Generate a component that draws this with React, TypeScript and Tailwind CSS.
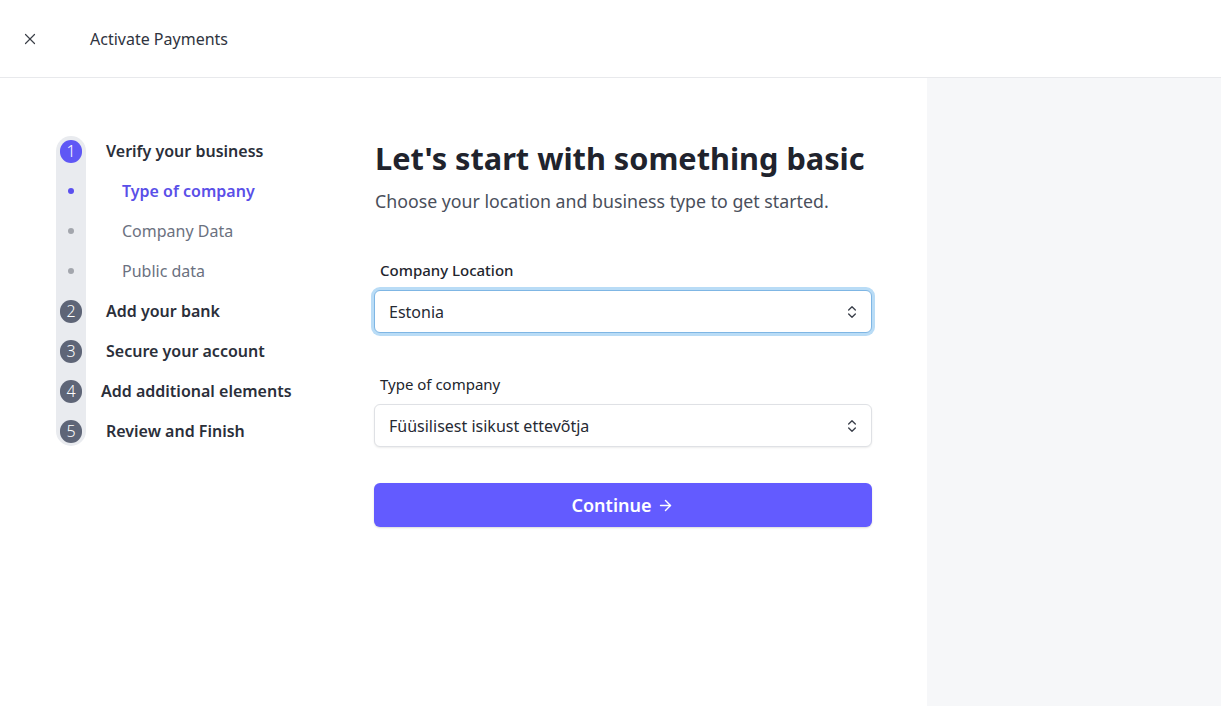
import React from 'react';
import { X, ChevronsUpDown, ArrowRight } from 'lucide-react';

type Row =
  | { kind: 'step'; n: number; label: string; active?: boolean; shift?: boolean }
  | { kind: 'sub'; label: string; active?: boolean };

const rows: Row[] = [
  { kind: 'step', n: 1, label: 'Verify your business', active: true },
  { kind: 'sub', label: 'Type of company', active: true },
  { kind: 'sub', label: 'Company Data' },
  { kind: 'sub', label: 'Public data' },
  { kind: 'step', n: 2, label: 'Add your bank' },
  { kind: 'step', n: 3, label: 'Secure your account' },
  { kind: 'step', n: 4, label: 'Add additional elements', shift: true },
  { kind: 'step', n: 5, label: 'Review and Finish' },
];

const Stepper: React.FC = () => (
  <div className="flex w-[318px] shrink-0 items-start pt-px">
    {/* track */}
    <div className="flex w-[30px] flex-col items-center gap-[18px] rounded-full bg-[#e9ebef] py-1">
      {rows.map((r, i) => (
        <div key={i} className="flex h-[22px] w-[22px] items-center justify-center">
          {r.kind === 'step' ? (
            <div
              className={`flex h-[23px] w-[23px] items-center justify-center rounded-full text-[16px] font-light text-white ${
                r.active ? 'bg-[#5f57f5]' : 'bg-[#5e6577]'
              }`}
            >
              {r.n}
            </div>
          ) : (
            <div className={`h-[6px] w-[6px] rounded-full ${r.active ? 'bg-[#5b50ef]' : 'bg-[#a3a6ad]'}`} />
          )}
        </div>
      ))}
    </div>
    {/* labels */}
    <div className="ml-5 flex flex-col gap-[18px] py-1">
      {rows.map((r, i) => (
        <div
          key={i}
          className={`flex h-[22px] items-center whitespace-nowrap text-[16px] ${
            r.kind === 'sub'
              ? `pl-4 ${r.active ? 'font-semibold text-[#5a4fe8]' : 'text-[#6b7180]'}`
              : `font-semibold text-[#2b2f3a] ${r.shift ? '-ml-[5px]' : ''}`
          }`}
        >
          {r.label}
        </div>
      ))}
    </div>
  </div>
);

const SelectBox: React.FC<{ value: string; focused?: boolean }> = ({ value, focused }) => (
  <div
    className={`flex h-[43px] w-full items-center justify-between rounded-md bg-white pl-[14px] pr-[11px] text-[16px] text-[#262a33] ${
      focused
        ? 'border border-[#7fb6e4] ring-[3px] ring-[#b9dcf6]'
        : 'border border-[#dfe1e5] shadow-[0_1px_2px_rgba(0,0,0,0.08)]'
    }`}
  >
    <span>{value}</span>
    <ChevronsUpDown className="h-4 w-4 text-[#3a3f4a]" strokeWidth={2} />
  </div>
);

const App: React.FC = () => {
  return (
    <div
      className="flex h-[706px] w-full flex-col bg-white"
      style={{ fontFamily: "'Noto Sans', 'Open Sans', sans-serif" }}
    >
      {/* Header */}
      <div className="flex h-[78px] shrink-0 items-center border-b border-[#e8e9ec] pl-[21px]">
        <X className="h-[18px] w-[18px] text-[#3b3f48]" strokeWidth={1.6} />
        <span className="ml-[51px] text-[16px] text-[#2f3440]">Activate Payments</span>
      </div>

      {/* Body */}
      <div className="flex min-h-0 flex-1">
        <div className="flex w-[927px] shrink-0 items-start pl-[56px] pt-[57px]">
          <Stepper />

          <div className="flex w-[498px] flex-col">
            <h1 className="mt-[5px] pl-px text-[30.7px] font-bold leading-[36px] text-[#20232d]">
              Let's start with something basic
            </h1>
            <p className="mt-[11px] pl-px text-[17.75px] leading-[28px] text-[#4a4f5b]">
              Choose your location and business type to get started.
            </p>

            <label className="mt-[45px] pl-[6px] text-[15px] font-medium leading-5 text-[#22252d]">
              Company Location
            </label>
            <div className="mt-[10px]">
              <SelectBox value="Estonia" focused />
            </div>

            <label className="mt-[41px] pl-[6px] text-[15px] leading-5 text-[#22252d]">Type of company</label>
            <div className="mt-[10px]">
              <SelectBox value="Füüsilisest isikust ettevõtja" />
            </div>

            <button className="mt-[36px] flex h-[44px] w-full items-center justify-center gap-1.5 rounded-md bg-[#635bff] text-[18px] font-semibold text-white shadow-[0_1px_2px_rgba(0,0,0,0.15)]">
              Continue
              <ArrowRight className="h-[17px] w-[17px]" strokeWidth={2} />
            </button>
          </div>
        </div>

        <div className="flex-1 bg-[#f6f7f9]" />
      </div>
    </div>
  );
};

export default App;
